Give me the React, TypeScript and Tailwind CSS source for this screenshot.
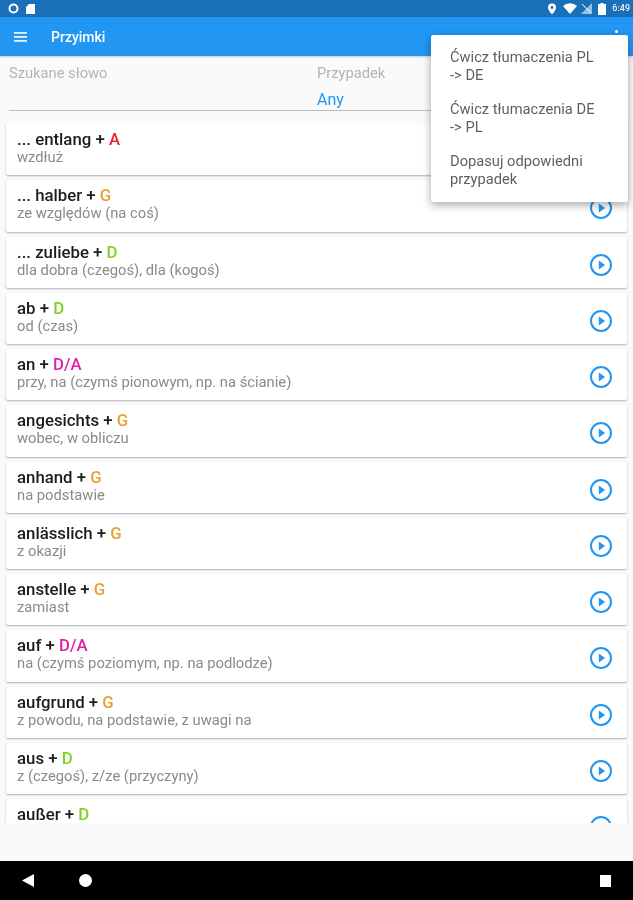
import React from "react";

const C: Record<string, string> = {
  A: "text-[#f0202c]",
  G: "text-[#e8a033]",
  D: "text-[#7ed321]",
  "D/A": "text-[#e01fa8]",
};

const rows: [string, string, string][] = [
  ["... entlang", "A", "wzdłuż"],
  ["... halber", "G", "ze względów (na coś)"],
  ["... zuliebe", "D", "dla dobra (czegoś), dla (kogoś)"],
  ["ab", "D", "od (czas)"],
  ["an", "D/A", "przy, na (czymś pionowym, np. na ścianie)"],
  ["angesichts", "G", "wobec, w obliczu"],
  ["anhand", "G", "na podstawie"],
  ["anlässlich", "G", "z okazji"],
  ["anstelle", "G", "zamiast"],
  ["auf", "D/A", "na (czymś poziomym, np. na podlodze)"],
  ["aufgrund", "G", "z powodu, na podstawie, z uwagi na"],
  ["aus", "D", "z (czegoś), z/ze (przyczyny)"],
  ["außer", "D", "poza, oprócz"],
];

function PlayIcon() {
  return (
    <svg width="24" height="24" viewBox="0 0 24 24" fill="none" className="mt-[5px]">
      <circle cx="12" cy="12" r="10" stroke="#2196f3" strokeWidth="2" />
      <path d="M9.8 7.6 16 12l-6.2 4.4z" fill="#2196f3" />
    </svg>
  );
}

function StatusIcons() {
  return (
    <div className="flex items-center gap-[4px]">
      <svg width="10" height="12" viewBox="0 0 10 12"><path d="M5 0.5a4 4 0 0 0-4 4c0 3 4 7 4 7s4-4 4-7a4 4 0 0 0-4-4z" fill="#fff" /><circle cx="5" cy="4.5" r="1.4" fill="#1a73bd" /></svg>
      <svg width="14" height="11" viewBox="0 0 14 11" className="ml-[2px]"><path d="M0 3a10.5 10.5 0 0 1 14 0L7 11z" fill="#fff" /></svg>
      <svg width="11" height="11" viewBox="0 0 11 11"><path d="M0 11 11 0v11z" fill="#fff" fillOpacity="0.55" /><path d="M1 1l9 9" stroke="#fff" /></svg>
      <svg width="8" height="12" viewBox="0 0 8 12" className="ml-[2px]"><path d="M2.5 0h3v1H8v11H0V1h2.5z" fill="#fff" /></svg>
      <span className="ml-[2px] text-[9px] font-medium leading-none text-white/90">6:49</span>
    </div>
  );
}

export default function App() {
  return (
    <div className="relative flex h-[900px] w-[633px] flex-col overflow-hidden bg-[#fafafa] font-['Roboto',sans-serif] blur-[0.5px]">
      <div className="flex h-[17px] shrink-0 items-center justify-between bg-[#1a70b8] pl-[8px] pr-[3px]">
        <div className="flex items-center gap-[7px]">
          <svg width="11" height="11" viewBox="0 0 11 11"><circle cx="5.5" cy="5.5" r="4" fill="none" stroke="#fff" strokeWidth="2" /></svg>
          <svg width="9" height="10" viewBox="0 0 9 10"><path d="M3 0h6v10H0V3z" fill="#fff" /></svg>
        </div>
        <StatusIcons />
      </div>

      <div className="flex h-[39px] shrink-0 items-center justify-between bg-[#2196f3] pl-[14px] pr-[15px] shadow-[0_1px_2px_rgba(0,0,0,0.2)]">
        <div className="flex items-center">
          <svg width="13" height="10" viewBox="0 0 13 10" fill="#e3f2fd"><rect width="13" height="1.8" /><rect y="4" width="13" height="1.8" /><rect y="8" width="13" height="1.8" /></svg>
          <span className="ml-[24px] pt-[1px] text-[14px] font-medium text-white">Przyimki</span>
        </div>
        <svg width="3" height="13" viewBox="0 0 3 13" fill="#fff"><circle cx="1.5" cy="1.5" r="1.5" /><circle cx="1.5" cy="6.5" r="1.5" /><circle cx="1.5" cy="11.5" r="1.5" /></svg>
      </div>

      <div className="h-[55px] shrink-0 px-[9px] pt-[9px]">
        <div className="flex h-[46px] border-b border-[#bdbdbd]">
          <div className="w-[308px] text-[14.7px] leading-[17px] text-[#b4b4b4]">Szukane słowo</div>
          <div className="flex-1">
            <div className="text-[14.7px] leading-[17px] text-[#b4b4b4]">Przypadek</div>
            <div className="mt-[9px] text-[16px] leading-[18px] text-[#2196f3]">Any</div>
          </div>
        </div>
      </div>

      <div className="mt-[13px] flex h-[699px] shrink-0 flex-col gap-[5px] overflow-hidden px-[6px]">
        {rows.map(([w, c, t]) => (
          <div key={w} className="flex h-[51.25px] shrink-0 items-center justify-between rounded-[2px] bg-white pl-[11px] pr-[14px] shadow-[0_1px_2px_rgba(0,0,0,0.3)]">
            <div className="min-w-0 self-start pt-[6px]">
              <div className="text-[16.8px] font-medium leading-[18px] text-[#1c1c1c]">
                {w} + <span className={C[c]}>{c}</span>
              </div>
              <div className="text-[14.75px] leading-[18px] text-[#8a8a8a]">{t}</div>
            </div>
            <PlayIcon />
          </div>
        ))}
      </div>

      <div className="flex-1" />

      <div className="flex h-[39px] shrink-0 items-center justify-between bg-black pl-[22px] pr-[22px]">
        <div className="flex items-center gap-[45px]">
          <svg width="12" height="13" viewBox="0 0 12 13"><path d="M12 0v13L0 6.5z" fill="#fff" /></svg>
          <svg width="13" height="13" viewBox="0 0 13 13"><circle cx="6.5" cy="6.5" r="6.5" fill="#fff" /></svg>
        </div>
        <div className="h-[12px] w-[11px] bg-white" />
      </div>

      <div className="absolute left-[431px] top-[35px] w-[197px] rounded-[2px] bg-white pb-[14px] pl-[19px] pt-[13px] text-[14.7px] leading-[18px] text-[#5f5f5f] shadow-[0_3px_8px_rgba(0,0,0,0.35)]">
        <div>Ćwicz tłumaczenia PL<br />-&gt; DE</div>
        <div className="mt-[16px]">Ćwicz tłumaczenia DE<br />-&gt; PL</div>
        <div className="mt-[16px]">Dopasuj odpowiedni<br />przypadek</div>
      </div>
    </div>
  );
}
